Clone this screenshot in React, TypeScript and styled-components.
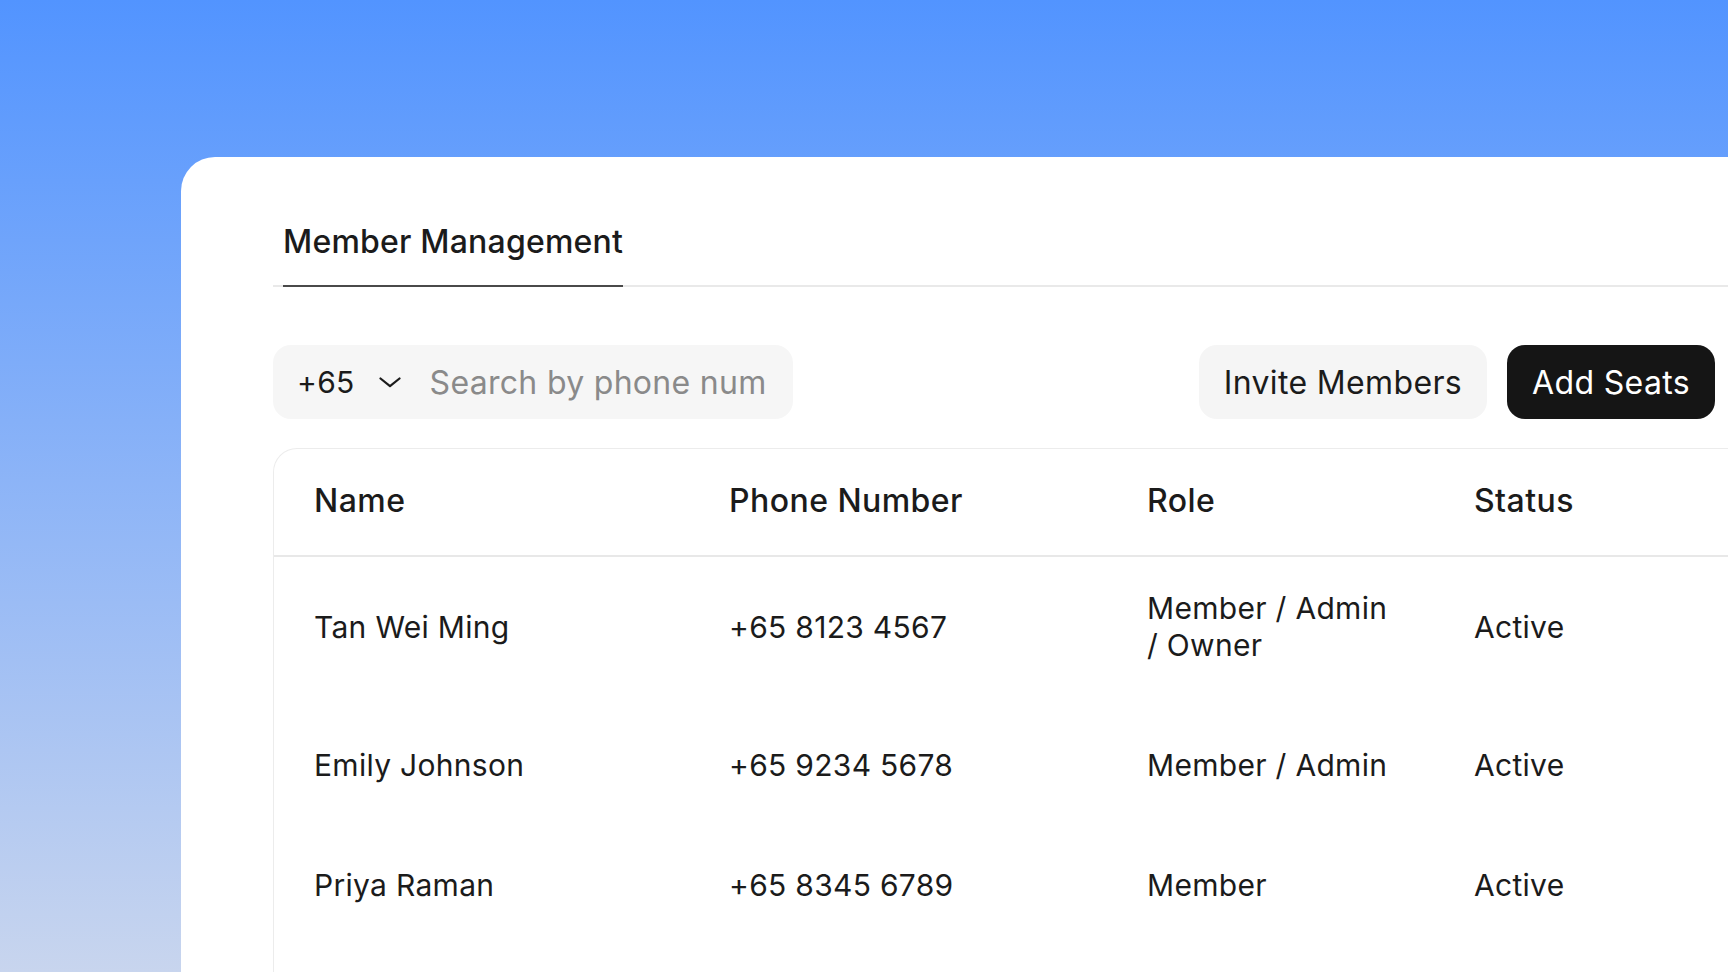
import React from "react";
import styled, { createGlobalStyle } from "styled-components";

const GlobalStyle = createGlobalStyle`
  html, body {
    margin: 0;
    padding: 0;
    height: 972px;
    overflow: hidden;
  }
  body {
    font-family: Inter, "Noto Sans", "Liberation Sans", sans-serif;
    color: #161616;
    background: linear-gradient(180deg, #5294ff 0%, #9bbcf5 62%, #c8d5ee 100%);
  }
`;

const Page = styled.div`
  height: 972px;
  padding: 157px 0 0 181px;
  box-sizing: border-box;
  overflow: hidden;
`;

const Card = styled.section`
  width: 1760px;
  min-height: 900px;
  background: #ffffff;
  border-radius: 34px;
  padding: 65px 0 0 92px;
  box-sizing: border-box;
  display: flex;
  flex-direction: column;
`;

const TabBar = styled.div`
  display: flex;
  padding-left: 10px;
  border-bottom: 2px solid #e9e9e9;
`;

const Tab = styled.div<{ $active?: boolean }>`
  font-size: 32px;
  line-height: 40px;
  font-weight: 500;
  letter-spacing: 0.2px;
  color: #1b1b1b;
  padding: 0 0 23px;
  margin-bottom: -2px;
  border-bottom: 2px solid ${(p) => (p.$active ? "#4a4a4a" : "transparent")};
`;

const Toolbar = styled.div`
  width: 1442px;
  margin-top: 58px;
  display: flex;
  align-items: center;
  gap: 20px;
`;

const SearchBox = styled.div`
  width: 520px;
  height: 74px;
  box-sizing: border-box;
  background: #f6f6f6;
  border-radius: 18px;
  display: flex;
  align-items: center;
  padding: 0 26px 0 24px;
`;

const CountryCode = styled.div`
  display: flex;
  align-items: center;
  gap: 24px;
  font-size: 30px;
  letter-spacing: 0.3px;
  color: #1b1b1b;
  flex-shrink: 0;
`;

const SearchInput = styled.input`
  flex: 1;
  min-width: 0;
  margin-left: 29px;
  border: none;
  outline: none;
  background: transparent;
  font-family: inherit;
  font-size: 32px;
  letter-spacing: 0.3px;
  color: #1b1b1b;
  padding: 0;
  &::placeholder {
    color: #8a8a8a;
  }
`;

const Spacer = styled.div`
  flex: 1;
`;

const Button = styled.button<{ $primary?: boolean }>`
  height: 74px;
  padding: 0 25px;
  border: none;
  border-radius: 18px;
  font-family: inherit;
  font-size: 32px;
  font-weight: 400;
  letter-spacing: 0.35px;
  background: ${(p) => (p.$primary ? "#151515" : "#f5f5f5")};
  color: ${(p) => (p.$primary ? "#ffffff" : "#1b1b1b")};
  cursor: pointer;
`;

const Table = styled.div`
  flex: 1;
  margin-top: 29px;
  border: 1px solid #ececec;
  border-right: none;
  border-bottom: none;
  border-top-left-radius: 24px;
  display: flex;
  flex-direction: column;
`;

const Row = styled.div<{ $head?: boolean }>`
  display: grid;
  grid-template-columns: 415px 418px 327px 1fr;
  align-items: center;
  padding: ${(p) => (p.$head ? "32px 0 34px 40px" : "33px 0 50px 40px")};
  border-bottom: ${(p) => (p.$head ? "2px solid #e8e8e8" : "none")};
`;

const Cell = styled.div<{ $head?: boolean }>`
  max-width: 254px;
  font-size: ${(p) => (p.$head ? "32px" : "30px")};
  line-height: ${(p) => (p.$head ? "40px" : "37px")};
  font-weight: ${(p) => (p.$head ? 500 : 400)};
  letter-spacing: ${(p) => (p.$head ? "0.45px" : "0.3px")};
  white-space: ${(p) => (p.$head ? "nowrap" : "normal")};
  color: #1b1b1b;
`;

const Chevron = () => (
  <svg width="22" height="11" viewBox="0 0 22 11" fill="none">
    <path
      d="M1.5 1.5L11 9.2L20.5 1.5"
      stroke="#1b1b1b"
      strokeWidth="2.2"
      strokeLinecap="round"
      strokeLinejoin="round"
    />
  </svg>
);

const members = [
  { name: "Tan Wei Ming", phone: "+65 8123 4567", role: "Member / Admin / Owner", status: "Active" },
  { name: "Emily Johnson", phone: "+65 9234 5678", role: "Member / Admin", status: "Active" },
  { name: "Priya Raman", phone: "+65 8345 6789", role: "Member", status: "Active" },
];

export default function App() {
  return (
    <>
      <GlobalStyle />
      <Page>
        <Card>
          <TabBar>
            <Tab $active>Member Management</Tab>
          </TabBar>
          <Toolbar>
            <SearchBox>
              <CountryCode>
                +65
                <Chevron />
              </CountryCode>
              <SearchInput placeholder="Search by phone number" />
            </SearchBox>
            <Spacer />
            <Button>Invite Members</Button>
            <Button $primary>Add Seats</Button>
          </Toolbar>
          <Table>
            <Row $head>
              <Cell $head>Name</Cell>
              <Cell $head>Phone Number</Cell>
              <Cell $head>Role</Cell>
              <Cell $head>Status</Cell>
            </Row>
            {members.map((m) => (
              <Row key={m.name}>
                <Cell>{m.name}</Cell>
                <Cell>{m.phone}</Cell>
                <Cell>{m.role}</Cell>
                <Cell>{m.status}</Cell>
              </Row>
            ))}
          </Table>
        </Card>
      </Page>
    </>
  );
}
